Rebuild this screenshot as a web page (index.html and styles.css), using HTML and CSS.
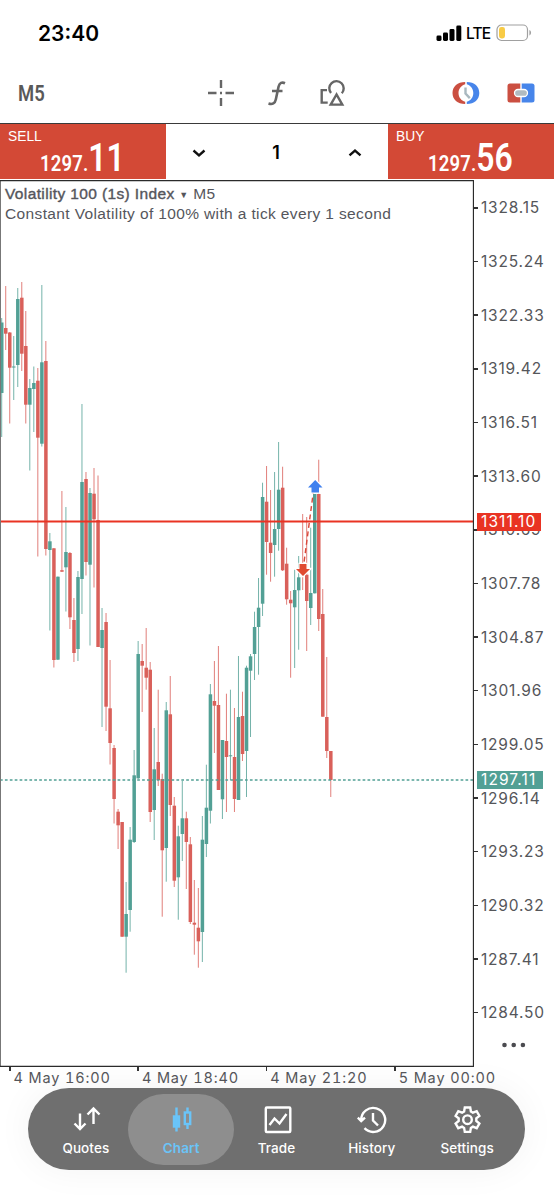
FILE: index.html
```
<!DOCTYPE html>
<html lang="en">

<head>
  <meta charset="UTF-8" />
  <meta name="viewport" content="width=device-width, initial-scale=1.0" />
  <title>Chart</title>
  <link rel="stylesheet" href="styles.css">
</head>

<body>
  <div class="status">
    <span class="clock">23:40</span>
    <div class="signal">
      <svg width="26" height="17" viewBox="0 0 26 17">
        <rect x="0.5" y="10.5" width="5" height="5.5" rx="1.4" />
        <rect x="7" y="7.5" width="5" height="8.5" rx="1.4" />
        <rect x="13.5" y="4" width="5" height="12" rx="1.4" />
        <rect x="20.3" y="0.5" width="5" height="15.5" rx="1.4" />
      </svg>
      <span class="lte">LTE</span>
      <svg width="36" height="18" viewBox="0 0 36 18">
        <rect x="1" y="1" width="30.5" height="15.5" rx="4.5" fill="none" stroke="#a0a0a0" stroke-width="1.2" />
        <rect x="3" y="3" width="6" height="11.5" rx="2.4" fill="#f8cb45" />
        <path d="M33.4 6v5.4c2.2-1 2.2-4.4 0-5.4z" fill="#a0a0a0" />
      </svg>
    </div>
  </div>

  <div class="toolbar">
    <span class="timeframe">M5</span>
    <div class="tools">
      <svg width="28" height="28" viewBox="0 0 28 28" fill="none" stroke="#666" stroke-width="2.4">
        <path d="M14 1v8M14 19v8M1 14h8.5M18.5 14H27M13 14h2" />
      </svg>
      <svg width="20" height="28" viewBox="0 0 20 28" fill="none" stroke="#666" stroke-width="2.6">
        <path d="M18 4.200c-3-1.400-5.500-.4-6.400 3.300L8.800 20.500c-.8 4-3.300 5.200-7.300 4M5 12h10.500" />
      </svg>
      <svg width="28" height="28" viewBox="0 0 28 28" fill="none" stroke="#666" stroke-width="2.400">
        <path d="M8 11.100H2.700v12.500h6" />
        <path d="M12 14A7.200 7.200 0 1 1 22.800 14.200" />
        <path d="M17.500 15.500l-5.800 10.100h11.600z" />
      </svg>
    </div>
    <div class="modes">
      <svg width="28" height="24" viewBox="0 0 28 24">
        <path d="M13.200 1C5.500 1 .500 5.500.500 12s5 11 12.700 11v-2.200C9.300 19.500 6.500 16.500 6.500 12s2.800-7.500 6.700-8.800z" fill="#cb4f41" />
        <path d="M14.800 1C22.500 1 27.300 5.500 27.300 12s-4.800 11-12.500 11v-2.200c3.900-1.300 6.500-4.300 6.500-8.800s-2.600-7.500-6.500-8.800z" fill="#4785ea" />
        <path d="M13.500 6.500v6l4.300 4.600" fill="none" stroke="#a9b8bf" stroke-width="2.400" />
      </svg>
      <svg width="28" height="20" viewBox="0 0 28 20">
        <path d="M13.300.500H3a2.500 2.500 0 0 0-2.500 2.500v14A2.500 2.500 0 0 0 3 19.500h10.300z" fill="#cb4f41" />
        <path d="M14.700.500H25A2.500 2.500 0 0 1 27.500 3v14a2.500 2.500 0 0 1-2.500 2.500H14.700z" fill="#4785ea" />
        <rect x="7.500" y="6.500" width="13" height="7" rx="3.500" fill="#b0bac0" stroke="#fff" stroke-width="1.300" />
      </svg>
    </div>
  </div>

  <div class="deal">
    <div class="side">
      <span class="side-name">SELL</span>
      <div class="quote"><span class="small">1297.</span><span class="big">11</span></div>
    </div>
    <div class="volume">
      <svg width="14" height="10" viewBox="0 0 14 10"><path d="M1.500 2.500l5.500 4.800 5.500-4.800" /></svg>
      <span>1</span>
      <svg width="14" height="10" viewBox="0 0 14 10"><path d="M1.500 7.300l5.500-4.800 5.500 4.800" /></svg>
    </div>
    <div class="side">
      <span class="side-name">BUY</span>
      <div class="quote"><span class="small">1297.</span><span class="big">56</span></div>
    </div>
  </div>

  <div class="chart">
    <div class="plot">
      <svg id="candles" width="474" height="887" viewBox="0 180 474 887"></svg>
      <div class="caption">
        <div><span class="symbol">Volatility 100 (1s) Index</span> <span class="arrow">▼</span> M5</div>
        <div class="about">Constant Volatility of 100% with a tick every 1 second</div>
      </div>
    </div>
    <div class="prices">
      <div>1328.15</div>
      <div>1325.24</div>
      <div>1322.33</div>
      <div>1319.42</div>
      <div>1316.51</div>
      <div>1313.60</div>
      <div>1310.69</div>
      <div>1307.78</div>
      <div>1304.87</div>
      <div>1301.96</div>
      <div>1299.05</div>
      <div>1296.14</div>
      <div>1293.23</div>
      <div>1290.32</div>
      <div>1287.41</div>
      <div>1284.50</div>
      <span class="tag level">1311.10</span>
      <span class="tag last">1297.11</span>
      <svg class="more" width="24" height="6" viewBox="0 0 24 6">
        <circle cx="2.500" cy="3" r="2.300" />
        <circle cx="11.700" cy="3" r="2.300" />
        <circle cx="20.900" cy="3" r="2.300" />
      </svg>
    </div>
  </div>

  <div class="times">
    <div>4 May 16:00</div>
    <div>4 May 18:40</div>
    <div>4 May 21:20</div>
    <div>5 May 00:00</div>
  </div>

  <nav class="tabs">
    <a class="tab">
      <svg width="30" height="28" viewBox="0 0 30 28">
        <path d="M9 7.500V23M3.500 17.500L9 23l5.500-5.500M22.500 18V2.500M16.500 8.500l6-6 6 6" />
      </svg>
      Quotes
    </a>
    <a class="tab active">
      <svg width="30" height="28" viewBox="0 0 30 28">
        <path d="M10.500 1.500V25.500M21.500 1.500V6M21.500 18V23" />
        <rect x="8" y="10.500" width="5" height="10" fill="#6ac4f8" />
        <rect x="18.800" y="6.500" width="5.400" height="11.500" />
      </svg>
      Chart
    </a>
    <a class="tab">
      <svg width="30" height="28" viewBox="0 0 30 28">
        <rect x="3.800" y="1.500" width="24.500" height="24.500" rx="1" />
        <path d="M7.500 19l5-6.500 5 5 7-9.500" />
      </svg>
      Trade
    </a>
    <a class="tab">
      <svg width="30" height="28" viewBox="0 0 30 28">
        <path d="M4.200 14A12 12 0 1 1 7.500 22.200M.800 11.700l3.400 3.300 3.800-3.300M16 7v7.500l5 5" />
      </svg>
      History
    </a>
    <a class="tab">
      <svg width="30" height="28" viewBox="0 0 30 28">
        <path d="M12.800 1.500h5.400l.7 4 2 1.200 3.800-1.500 2.700 4.700-3.100 2.500v2.600l3.100 2.500-2.700 4.700-3.800-1.500-2 1.200-.7 4h-5.400l-.7-4-2-1.200-3.800 1.500-2.700-4.700L6.700 15v-2.600L3.600 9.900l2.700-4.700 3.800 1.500 2-1.200z" />
        <circle cx="15.500" cy="13.700" r="4.300" />
      </svg>
      Settings
    </a>
  </nav>

  <script src="script.js"></script>
</body>

</html>
```
FILE: styles.css
```
* {
  box-sizing: border-box;
}

body {
  margin: 0;
  width: 554px;
  height: 1199px;
  overflow: hidden;
  background-color: #fff;
  font-family: "Inter", "Liberation Sans", sans-serif;
}

svg {
  display: block;
}

/* status bar */
.status {
  display: flex;
  justify-content: space-between;
  align-items: center;
  height: 66px;
  padding: 0 22px 0 38px;
}

.clock {
  font-size: 21px;
  font-weight: 600;
}

.signal {
  display: flex;
  align-items: center;
  gap: 4px;
}

.lte {
  width: 26px;
  font-size: 15.5px;
  font-weight: 500;
  letter-spacing: -0.8px;
}

/* toolbar */
.toolbar {
  display: flex;
  align-items: center;
  height: 57px;
  padding: 0 19px 3px 18px;
}

.timeframe {
  width: 189px;
  color: #595959;
  font-family: "Roboto", sans-serif;
  font-size: 22.5px;
  font-weight: 600;
  transform: scaleX(0.82);
  transform-origin: left;
}

.tools {
  display: flex;
  flex: 1;
  gap: 32px;
}

.modes {
  display: flex;
  align-items: center;
  gap: 27px;
}

/* one click trading */
.deal {
  display: flex;
  height: 57px;
  border-top: 1.5px solid #3a3a3a;
}

.side {
  width: 166px;
  height: 55px;
  padding: 4px 0 0 8px;
  background-color: #d34936;
  color: #fff;
}

.side-name {
  display: block;
  height: 16px;
  font-family: "Liberation Sans", sans-serif;
  font-size: 13.8px;
  line-height: 18px;
}

.quote {
  width: 100px;
  margin-left: 32px;
  font-family: "Roboto", sans-serif;
  line-height: 28px;
  white-space: nowrap;
  transform: scaleX(0.84);
  transform-origin: left;
}

.small {
  font-size: 22px;
  font-weight: 600;
  letter-spacing: 0.2px;
}

.big {
  font-size: 38px;
  font-weight: 600;
}

.volume {
  display: flex;
  flex: 1;
  justify-content: space-between;
  align-items: center;
  height: 57px;
  padding: 0 26px;
  font-size: 18px;
  font-weight: 600;
}

.volume span {
  margin-right: 2px;
}

.volume svg {
  fill: none;
  stroke: #111;
  stroke-width: 2.4;
}

/* chart */
.chart {
  display: flex;
  height: 887px;
}

.plot {
  position: relative;
  width: 474px;
}

.caption {
  position: absolute;
  left: 5px;
  top: 4px;
  color: #55565c;
  font-family: "Liberation Sans", sans-serif;
  font-size: 15.5px;
  letter-spacing: 0.37px;
  line-height: 20px;
  white-space: nowrap;
}

.symbol {
  -webkit-text-stroke: 0.4px #55565c;
}

.arrow {
  font-size: 9px;
  vertical-align: 1px;
}

.about {
  margin-top: -1px;
}

.prices {
  position: relative;
  width: 80px;
  padding-top: 1px;
  color: #55565a;
  font-size: 15.5px;
  letter-spacing: 0.8px;
}

.prices div {
  display: flex;
  align-items: center;
  height: 53.67px;
}

.prices div::before {
  content: "";
  width: 4px;
  height: 1.5px;
  margin-right: 3px;
  background-color: #333;
}

.tag {
  position: absolute;
  left: 3px;
  height: 18px;
  padding-left: 4px;
  color: #fff;
  line-height: 18px;
}

.level {
  top: 333px;
  width: 64px;
  background-color: #e93323;
  letter-spacing: 1.1px;
}

.last {
  top: 591px;
  width: 66px;
  background-color: #52a095;
  letter-spacing: 1.1px;
}

.more {
  position: absolute;
  left: 28px;
  top: 862px;
  fill: #4b4b50;
}

.times {
  display: flex;
  height: 21px;
  padding-left: 9px;
  color: #55565a;
  font-size: 14.5px;
  font-variant-numeric: tabular-nums;
  letter-spacing: 0.85px;
  line-height: 21px;
  white-space: nowrap;
}

.times div {
  display: flex;
  flex: none;
  width: 128.4px;
}

.times div::before {
  content: "";
  width: 1.5px;
  height: 4px;
  margin-right: 3px;
  background-color: #333;
}

/* bottom tabs */
.tabs {
  display: flex;
  justify-content: center;
  width: 497px;
  height: 82px;
  margin-left: 28px;
  padding: 6px 0;
  border-radius: 41px;
  background-color: #6f6f6f;
  box-shadow: 0 0 36px rgba(0, 0, 0, 0.05);
}

.tab {
  width: 106px;
  height: 71px;
  margin: 0 -5.35px;
  padding-top: 12px;
  border-radius: 36px;
  color: #fff;
  font-size: 13.5px;
  font-weight: 500;
  letter-spacing: 0.1px;
  line-height: 28px;
  text-align: center;
}

.tab svg {
  margin: 0 auto;
  fill: none;
  stroke: #fff;
  stroke-width: 2.4;
}

.active {
  background-color: #8e8e8e;
  color: #6ac4f8;
  font-weight: 600;
}

.active svg {
  stroke: #6ac4f8;
}
```
FILE: script.js
```
const UP = '#52a095';
const DOWN = '#d9605a';
const STEP = 4.013; // distance between two candles
const $svg = document.querySelector('#candles');

// [direction, high, body top, body bottom, low]
const candles = [
  ['u', 318, 322.5, 393, 437], ['d', 286, 328, 333.7, 350], ['d', 332, 332.5, 367.7, 423.5],
  ['u', 336, 366.5, 367.5, 400], ['u', 288, 299, 365, 387], ['d', 282, 297.7, 353.7, 371],
  ['d', 311, 346, 404.7, 423.5], ['u', 379, 388, 404.7, 470.5], ['u', 366.5, 383, 389, 432],
  ['d', 368, 380.7, 437.7, 556.5], ['u', 285, 362.3, 443.7, 446.5], ['d', 341, 361, 549, 555.5],
  ['u', 533, 541.3, 550, 630.5], ['d', 548, 548.3, 660, 667.5], ['u', 576.5, 576.7, 659.7, 660],
  ['d', 491, 570.2, 571.7, 572], ['u', 507, 552, 567.3, 611.5], ['d', 552, 553, 617.3, 629],
  ['d', 598, 620, 653, 662], ['u', 571, 577, 649, 661], ['u', 404, 482, 579, 614],
  ['d', 472, 479, 562, 575.5], ['u', 488, 493, 564.7, 645.5], ['d', 468, 493.7, 519.3, 587.5],
  ['d', 475.5, 520, 647, 647], ['u', 608, 630, 648, 727], ['d', 613, 622, 706.7, 731],
  ['d', 660, 708.3, 743, 764.5], ['d', 745, 748, 799, 823.5], ['d', 809, 811.7, 825.3, 849],
  ['d', 822, 822, 936.7, 937], ['u', 882, 914, 936.7, 972.7], ['u', 827, 839.7, 910, 931.7],
  ['u', 750, 775.3, 842, 843], ['u', 641, 654, 778.3, 779], ['d', 644, 661, 665.7, 712],
  ['d', 628, 667.7, 677.7, 689.7], ['d', 662, 669.7, 812, 822], ['u', 728, 769.3, 810, 840],
  ['d', 689.7, 762, 780, 786], ['d', 773.7, 779, 850.3, 916.7], ['u', 702, 710.3, 848, 881.7],
  ['d', 676, 714.3, 805, 816], ['d', 797, 805.7, 880.7, 887], ['u', 825.7, 836.3, 877.3, 919.7],
  ['u', 781, 818.3, 834, 861], ['d', 811.7, 818.3, 842, 889], ['d', 837, 844.3, 922, 924],
  ['d', 880, 922.7, 924.7, 954.7], ['d', 888, 927.7, 941.3, 967.7], ['u', 816, 839.7, 932, 962],
  ['u', 764.7, 807.7, 844, 857], ['u', 684, 694.3, 810.7, 823.5], ['d', 661, 701, 705.7, 753],
  ['d', 646, 705, 790, 790], ['u', 740, 740, 799.3, 819], ['d', 693.7, 741, 757, 812],
  ['u', 689.7, 755.3, 756.3, 780], ['d', 708, 757, 799, 812], ['u', 656, 717, 800, 800],
  ['d', 691.7, 716, 754, 761], ['u', 665.7, 667.7, 751, 797], ['u', 654, 656.3, 670.7, 737],
  ['u', 611.7, 627, 654, 680], ['u', 578, 607.7, 627, 674.7], ['u', 482.7, 497, 603.7, 616],
  ['d', 466, 501.7, 542, 574.7], ['d', 490, 542.7, 553, 581.7], ['u', 472, 529, 545, 576.7],
  ['u', 442, 489.7, 529, 550.7], ['d', 466.7, 487.7, 570.3, 571], ['d', 547.7, 563.7, 599.3, 604.7],
  ['d', 591, 599.7, 603.3, 677.7], ['u', 569.7, 590, 607.3, 668], ['u', 556, 577.3, 590.3, 649.7],
  ['d', 514, 575, 576, 590], ['d', 517, 574.7, 601, 651], ['u', 527.7, 593, 608, 625],
  ['u', 494, 494, 593.3, 593.5], ['d', 459.7, 494, 619, 631], ['d', 589, 614, 716.7, 716.7],
  ['d', 657, 717, 751, 758], ['d', 751, 751, 780, 797],
];

const draw = (name, attrs) => {
  const el = document.createElementNS('http://www.w3.org/2000/svg', name);
  Object.keys(attrs).forEach((key) => el.setAttribute(key, attrs[key]));
  $svg.appendChild(el);
};

candles.forEach(([dir, high, top, bottom, low], i) => {
  const x = 1.7 + i * STEP;
  const fill = dir === 'u' ? UP : DOWN;
  draw('rect', { x: x - 0.5, y: high, width: 1, height: low - high, fill, opacity: 0.8 });
  draw('rect', { x: x - 1.7, y: top, width: 3.5, height: bottom - top, fill });
});

// last price and order level
draw('path', { d: 'M0 780H473', stroke: UP, 'stroke-width': 1.3, 'stroke-dasharray': '2.7 2.2' });
draw('path', { d: 'M0 521.500H473', stroke: '#e93323', 'stroke-width': 2 });

// deal: entry, exit and the line between them
draw('path', { d: 'M303 570L314 487', stroke: '#d9473a', 'stroke-width': 1.4, 'stroke-dasharray': '5 3.500' });
draw('path', { d: 'M299.500 564h7v5h3.500L303 576l-7-7h3.500z', fill: '#e04a31', stroke: '#fff', 'stroke-width': 2.4, 'paint-order': 'stroke' });
draw('path', { d: 'M311.500 492.500h7.500v-5h3.500L315.200 480l-7.200 7.500h3.500z', fill: '#4080ee', stroke: '#fff', 'stroke-width': 2.4, 'paint-order': 'stroke' });

// frame
draw('path', { d: 'M0.500 181V1067', stroke: '#777', 'stroke-width': 1 });
draw('path', { d: 'M0 180.700H473.500V1066.300H0', stroke: '#2b2b2b', 'stroke-width': 1.3, fill: 'none' });
```
